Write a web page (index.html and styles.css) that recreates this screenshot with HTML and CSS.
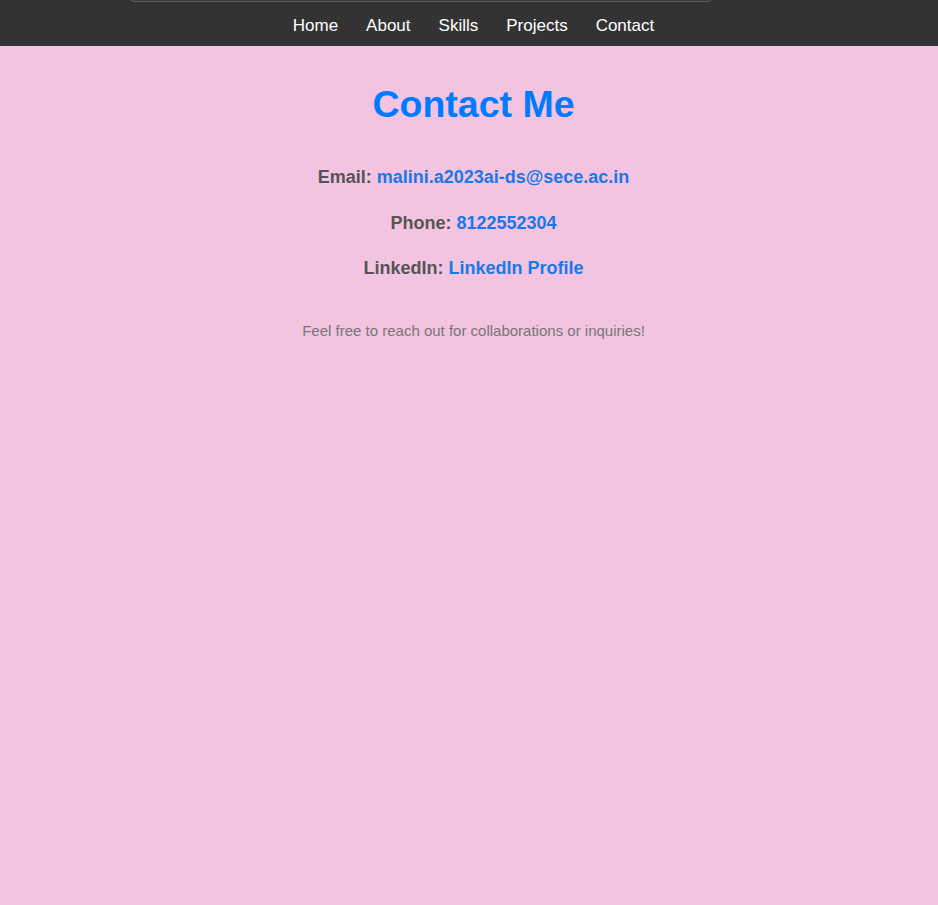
FILE: index.html
```html
<!DOCTYPE html>
<html lang="en">
<head>
<meta charset="UTF-8">
<title>Contact Me</title>
<link rel="stylesheet" href="styles.css">
</head>
<body>
<nav class="navbar">
  <span class="navbar-edge"></span>
  <ul class="nav-list">
    <li><a href="#">Home</a></li>
    <li><a href="#">About</a></li>
    <li><a href="#">Skills</a></li>
    <li><a href="#">Projects</a></li>
    <li><a href="#">Contact</a></li>
  </ul>
</nav>
<main class="contact">
  <h1 class="contact-title">Contact Me</h1>
  <p class="contact-line"><strong>Email:</strong> <a href="#">malini.a2023ai-ds@sece.ac.in</a></p>
  <p class="contact-line"><strong>Phone:</strong> <a href="#">8122552304</a></p>
  <p class="contact-line"><strong>LinkedIn:</strong> <a href="#">LinkedIn Profile</a></p>
  <p class="contact-note">Feel free to reach out for collaborations or inquiries!</p>
</main>
</body>
</html>
```
FILE: styles.css
```css
html, body {
  margin: 0;
  padding: 0;
}
body {
  background: #f3c4e1;
  font-family: "Liberation Sans", Arial, sans-serif;
  min-height: 905px;
}
.navbar {
  position: relative;
  height: 46px;
  background: #333333;
  overflow: hidden;
}
.navbar-edge {
  position: absolute;
  top: -12px;
  left: 128px;
  width: 584px;
  height: 12px;
  border: 1px solid #5e5e5e;
  border-radius: 8px;
  background: #383838;
}
.nav-list {
  list-style: none;
  margin: 0;
  padding: 16px 0 0 9px;
  display: flex;
  justify-content: center;
  gap: 28px;
}
.nav-list a {
  color: #ffffff;
  text-decoration: none;
  font-size: 17px;
  line-height: 20px;
}
.contact {
  text-align: center;
  padding: 37px 0 0 9px;
}
.contact-title {
  margin: 0 0 41px;
  font-size: 37.5px;
  line-height: 43px;
  color: #007bff;
  font-weight: bold;
}
.contact-line {
  margin: 0 0 24.5px;
  font-size: 18px;
  line-height: 21px;
  font-weight: bold;
  color: #555555;
}
.contact-line a {
  color: #1a78ea;
  text-decoration: none;
}
.contact-note {
  margin: 43px 0 0;
  font-size: 15px;
  line-height: 17px;
  color: #777777;
}
```
